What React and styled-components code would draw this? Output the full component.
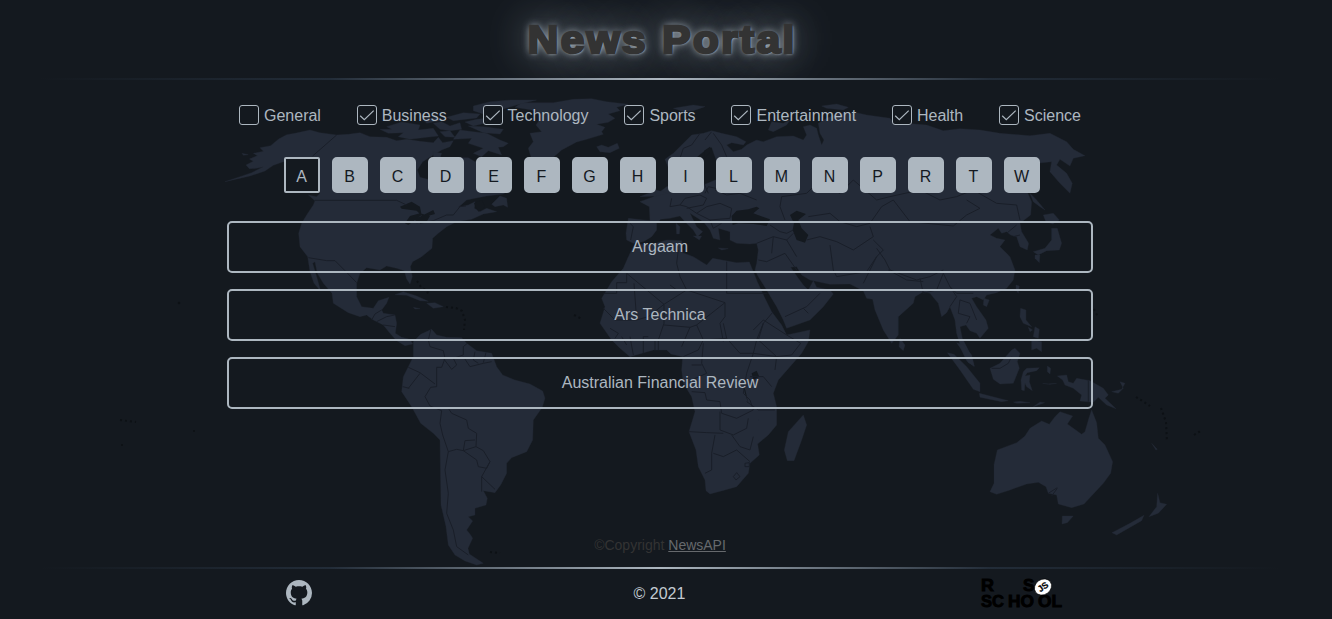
import React from "react";
import styled, { createGlobalStyle } from "styled-components";

const theme = {
  bg: "#14191f",
  land: "#242b38",
  border: "#191e28",
  light: "#adb7c0",
};

const GlobalStyle = createGlobalStyle`
  *, *::before, *::after { box-sizing: border-box; }
  body {
    margin: 0;
    background: ${theme.bg};
    color: ${theme.light};
    font: 16px/18px "Liberation Sans", Arial, sans-serif;
  }
`;

const Page = styled.div`
  position: relative;
  isolation: isolate;
  display: flex;
  flex-direction: column;
  height: 619px;
  padding-right: 12px;
  overflow: hidden;
`;

const MapBackdrop = styled.svg`
  position: absolute;
  inset: 0;
  z-index: -1;
  fill: ${theme.land};
  stroke: ${theme.land};
  stroke-width: 1;
  stroke-linejoin: round;
`;

const Header = styled.header`
  height: 78px;
  flex: none;
  display: flex;
  align-items: center;
  justify-content: center;
  overflow: hidden;
`;

const Title = styled.h1`
  margin: 0 0 0 4px;
  padding-top: 2px;
  font: bold 38.5px/56px "Liberation Sans", "Arial Black", sans-serif;
  letter-spacing: 2.2px;
  transform: scaleX(1.1);
  -webkit-text-stroke: 2.6px #333;
  color: #333;
  text-shadow: 1px 1px 2px #c6d2dc, 0 0 1em ${theme.light}, 0 0 0.2em #c6d2dc;
`;

const Divider = styled.div`
  height: 2px;
  flex: none;
  background: linear-gradient(90deg, transparent 3%, #222c38 25%, ${theme.light} 50%, #222c38 75%, transparent 97%);
`;

const Main = styled.main`
  flex: 1;
  width: 866px;
  margin: 0 auto;
  padding-top: 25px;
  display: flex;
  flex-direction: column;
`;

const Categories = styled.div`
  display: flex;
  justify-content: space-between;
  padding: 0 12px;
  height: 20px;
`;

const Category = styled.label`
  display: flex;
  align-items: flex-start;
  gap: 5px;
  line-height: 22px;
`;

const CheckBox = styled.span`
  display: flex;
  width: 20px;
  height: 20px;
  border: 1px solid ${theme.light};
  border-radius: 3px;
  background: ${theme.bg};
`;

const Letters = styled.nav`
  display: flex;
  justify-content: center;
  gap: 12px;
  margin: 32px 0 28px 4px;
`;

const Letter = styled.button`
  width: 36px;
  height: 36px;
  padding: 3px 1px 0 0;
  border: 2px solid ${theme.light};
  border-radius: ${(p) => (p.$active ? "2px" : "5px")};
  background: ${(p) => (p.$active ? theme.bg : theme.light)};
  color: ${(p) => (p.$active ? theme.light : theme.bg)};
  font: inherit;
`;

const Sources = styled.div`
  display: flex;
  flex-direction: column;
  gap: 16px;
`;

const Source = styled.div`
  height: 52px;
  display: flex;
  align-items: center;
  justify-content: center;
  border: 2px solid ${theme.light};
  border-radius: 5px;
`;

const Copyright = styled.p`
  margin: auto 0 14px;
  text-align: center;
  font-size: 14px;
  line-height: 16px;
  color: #333;
`;

const ApiLink = styled.a`
  color: #66696d;
  text-decoration: underline;
`;

const Footer = styled.footer`
  height: 50px;
  flex: none;
  width: 866px;
  margin: 0 auto;
  padding-bottom: 2px;
  display: grid;
  grid-template-columns: 144px 1fr 144px;
  align-items: center;
  justify-items: center;
  color: #c3cbd2;
`;

const Year = styled.span`
  padding: 2px 1px 0 0;
`;

const FooterIcon = styled.svg`
  display: block;
  fill: ${theme.light};
`;

const SchoolLogo = styled.svg`
  display: block;
  overflow: visible;
  margin: 0 0 1px 1px;
  font: bold 17px "Liberation Sans", Arial, sans-serif;
  fill: #000;
  stroke: #000;
  stroke-width: 0.9;
`;

const categories = ["General", "Business", "Technology", "Sports", "Entertainment", "Health", "Science"];
const letters = "ABCDEFGHILMNPRTW".split("");
const sources = ["Argaam", "Ars Technica", "Australian Financial Review"];

const northAmerica = [
  "15,275 60,260 95,248 130,230 110,235 88,236 78,225 100,214 88,207 112,197 100,190 130,184 120,173 152,167 176,147 200,134 225,130 270,120 300,128 350,135 385,133 420,128 450,140 500,142 530,152 560,148 600,154 640,158 655,142 668,158 700,152 690,170 665,180 640,195 608,215 592,240 600,262 640,272 690,290 700,250 690,215 715,203 745,203 765,215 790,205 810,235 840,270 870,300 850,312 800,318 765,325 740,330 715,352 745,345 765,335 763,355 780,365 800,355 830,365 790,372 755,388 710,395 680,410 655,430 638,445 636,475 605,500 578,515 571,530 577,560 570,582 560,567 553,542 530,535 500,528 480,540 440,533 420,550 410,580 410,620 425,650 460,655 475,632 507,622 500,640 485,660 490,670 525,675 530,700 526,730 545,742 570,748 578,762 555,767 530,752 510,730 490,705 460,690 440,675 420,680 385,668 340,640 336,610 310,580 292,550 285,515 278,520 290,560 302,603 282,580 270,545 263,500 240,470 236,430 245,400 260,375 280,345 285,332 265,315 290,320 300,310 290,270 250,235 210,222 190,215 160,226 135,243 90,258",
  "905,38 1000,38 1060,28 1115,26 1160,35 1225,43 1190,52 1200,62 1165,72 1185,85 1165,97 1130,103 1155,112 1145,125 1150,133 1100,148 1070,156 1025,180 1000,202 990,207 935,207 925,175 940,155 930,130 965,125 948,105 960,88 955,70 935,60 885,52",
  "500,110 545,96 600,105 595,120 640,115 655,138 620,142 570,148 535,140 550,128 505,130 480,118 515,118",
  "640,100 665,95 690,108 720,98 725,118 690,122 660,118",
  "735,96 770,88 800,85 800,98 760,108",
  "720,120 760,125 800,130 840,150 865,160 850,170 835,172 845,195 805,182 785,200 760,190 790,175 745,160 755,145 700,148",
  "760,48 810,35 870,30 950,30 900,42 840,60 790,72 760,62",
  "680,82 730,68 780,72 770,84 700,92",
  "610,88 650,82 670,90 620,100", "745,108 790,110 850,118 840,132 790,128",
  "660,125 690,122 705,142 675,140", "640,185 665,190 660,205 640,200",
  "1130,170 1145,165 1165,172 1192,160 1198,175 1170,188 1140,185",
  "815,343 840,318 860,325 863,352 850,345 825,350",
  "525,614 550,605 590,618 625,634 600,632 560,616", "620,640 645,638 670,650 640,655", "580,652 600,656 585,657",
  "66,190 85,194 70,196",
];

const southAmerica = [
  "100,185 122,163 155,148 170,165 200,172 245,173 260,190 290,212 335,220 350,260 368,285 405,300 450,312 488,333 495,355 487,382 460,420 458,480 440,515 395,533 380,550 380,580 362,615 345,638 310,632 322,655 318,675 285,685 285,705 265,710 278,723 260,750 272,765 278,775 264,805 268,822 310,850 290,855 255,843 225,825 205,795 198,740 183,675 180,480 160,460 122,430 95,380 65,335 70,290 100,230",
];

const africa = [
  "140,462 180,465 230,450 275,452 278,488 310,500 350,525 368,505 400,511 440,518 478,516 490,545 502,575 525,625 545,665 575,705 590,735 660,720 655,755 635,790 600,830 565,870 550,910 560,950 560,1005 535,1035 503,1062 508,1095 480,1120 475,1150 440,1190 405,1200 360,1212 348,1202 345,1170 325,1130 318,1080 297,1025 315,965 305,920 280,880 275,840 278,800 243,792 230,780 190,780 120,800 90,775 65,750 30,700 36,680 45,650 35,625 65,575 100,535 115,500 130,470",
  "640,975 650,1005 635,1050 612,1112 592,1112 583,1080 595,1025",
];

const eurasia = [
  "225,208 250,190 275,165 305,135 340,130 365,122 395,130 440,140 468,155 460,165 425,158 410,165 430,185 455,178 470,165 500,150 520,155 560,140 610,138 640,150 650,135 640,110 660,105 680,115 685,135 695,165 702,150 690,130 685,100 710,85 740,72 800,68 830,75 900,85 910,97 1010,105 1060,122 1110,116 1170,120 1230,130 1320,137 1380,130 1430,155 1450,178 1485,197 1450,205 1440,228 1410,208 1400,225 1430,250 1447,280 1440,310 1410,280 1380,245 1385,215 1340,220 1250,208 1300,280 1325,335 1322,375 1290,400 1295,425 1316,460 1312,480 1290,470 1280,440 1262,435 1250,425 1235,430 1225,415 1200,435 1220,445 1245,450 1230,470 1260,500 1275,540 1270,570 1250,595 1220,608 1190,615 1180,630 1160,620 1145,625 1160,650 1188,690 1195,715 1170,745 1160,730 1140,722 1128,705 1110,710 1117,745 1140,790 1153,830 1130,812 1115,780 1100,730 1095,690 1080,650 1070,668 1055,680 1045,640 1020,610 1000,605 975,620 970,640 925,680 925,735 905,760 880,720 855,660 848,628 830,625 820,602 780,582 720,583 660,570 635,555 620,530 602,532 625,565 640,585 655,600 670,572 680,592 720,600 730,612 700,650 660,690 590,715 580,690 560,650 530,600 505,560 495,540 500,520 505,480 500,460 480,462 440,460 420,450 420,425 385,415 390,450 370,445 360,420 340,395 300,370 320,410 338,425 322,440 310,420 285,395 270,378 240,385 212,388 200,400 200,420 185,440 160,455 130,460 110,450 108,430 115,385 180,392 178,350 150,335 190,320 230,290 262,280 262,240 290,230 300,250 340,285 400,260 375,200 365,172 340,185 310,210 290,250 240,245",
  "695,48 740,42 775,52 760,60 710,55", "535,120 545,95 580,100 600,90 590,105 550,125",
  "250,55 310,45 345,50 310,62 280,65", "150,320 198,300 234,310 200,318",
  "258,400 270,410 268,432 260,432", "310,438 335,438 328,450", "385,474 415,476 395,480",
  "1320,310 1340,330 1365,360 1350,350 1330,335", "1360,375 1390,370 1408,390 1388,402 1368,395",
  "1385,415 1402,415 1415,460 1408,480 1370,482 1345,495 1330,485 1365,475 1385,450", "1335,495 1350,495 1348,518 1335,505",
  "1278,585 1288,588 1285,610 1278,600", "1182,625 1198,630 1190,650 1180,645",
  "930,745 945,765 940,782 927,770", "1292,655 1308,660 1308,690 1325,710 1300,700 1290,680", "1325,750 1355,755 1355,785 1340,775 1325,780",
  "1315,712 1328,720 1320,725", "1335,710 1348,718 1345,745 1330,740",
];

const oceania = [
  "390,275 428,288 412,312 455,343 465,335 478,290 485,270 500,308 505,355 525,375 548,425 542,460 520,490 462,552 425,563 385,552 380,525 355,520 348,500 325,487 290,492 240,510 200,523 180,515 192,490 192,435 202,390 260,368 285,348 300,325 335,303 358,313 375,290",
  "397,588 430,588 412,608 396,612",
  "683,520 690,548 710,553 685,580 657,590 680,560", "642,586 635,602 560,645 546,638 600,610",
  "52,98 72,103 110,140 150,190 150,215 130,208 90,150", "148,220 235,242 215,245 150,232",
  "80,68 100,75 125,105 133,138 115,128 95,90",
  "180,145 210,130 245,90 255,85 270,100 262,125 268,145 250,190 210,192 190,178",
  "280,155 290,145 328,143 320,152 292,158 285,168 300,165 298,185 307,212 290,200 285,190 283,212 275,210 273,180",
  "352,138 362,145 360,162 352,155", "382,168 410,165 415,185 430,190 440,175 480,182 520,205 535,225 525,235 558,266 530,255 505,232 490,247 450,243 455,225 430,205 405,195 398,180",
  "250,246 270,244 300,248 260,250", "310,260 330,246 344,248", "338,190 355,192 380,190 360,193",
  "545,215 575,208 585,190 570,185 580,205 565,220", "665,370 682,388 678,390",
];

const seas = [
  "425,378 440,362 475,358 500,350 508,355 490,370 540,388 530,408 490,402 445,400 428,405",
  "600,375 620,362 648,372 625,390 635,415 655,435 645,458 620,450 608,420 612,400",
  "485,850 500,842 508,860 490,870", "458,882 466,900 475,940 465,910", "500,960 512,1020 505,985", "342,182 360,170 365,180 345,205",
];

function Region({ x, y, shapes, lines, dark }) {
  return (
    <g transform={`translate(${x} ${y}) scale(.3333)`}>
      {shapes.map((points) => (
        <polygon key={points} points={points} />
      ))}
      {dark && (
        <g fill={theme.bg} stroke="none">
          {dark.map((points) => (
            <polygon key={points} points={points} />
          ))}
        </g>
      )}
      <path d={lines} fill="none" stroke={theme.border} strokeWidth="3" />
    </g>
  );
}

const WorldMap = () => (
  <MapBackdrop width="1332" height="619" viewBox="0 0 1332 619" aria-hidden="true">
    <Region
      x={220}
      y={90}
      shapes={northAmerica}
      dark={["540,350 575,335 600,350 605,375 565,405 555,400 570,378 600,370 630,378 620,395 590,400 585,388 640,360 645,372 610,382 590,362 545,356", "762,340 785,330 795,350 775,365"]}
      lines="M350 135 278 198M285 331H530L560 345M600 400 640 392 680 375H700L720 350 738 348M265 503 320 512 345 512 375 542 410 578M455 690 465 672 485 660M470 695 500 680 525 675M490 705 525 710"
    />
    <Region
      x={380}
      y={280}
      shapes={southAmerica}
      lines="M152 150 145 180 150 200 190 212 195 235 185 262 170 262 170 320 152 322 135 350 150 378 185 392 180 430 188 465 205 515 195 570 205 640 200 700 220 750 230 800 265 825M85 262 120 278 165 312M85 325 120 280M68 320 88 325M190 235 215 268 230 255 220 235 250 225 250 200 262 190M250 230 270 260 310 250 335 245M285 215 280 240 295 250M318 218 310 248M205 385 215 400 260 420 265 445 290 460 288 500 250 512 230 508 205 515M250 512 255 482 285 480M288 500 310 512 330 545 320 565 295 560 290 540 250 512M330 545 305 590 345 628M305 590V635"
    />
    <Region
      x={590}
      y={90}
      shapes={[...africa, ...eurasia]}
      dark={seas}
      lines="M110 550 222 643 290 600 270 560 260 520 265 480M410 515V610H530M290 600 405 638V680L390 700 400 755M240 585 260 600M132 580 140 690H75L40 655M110 550V578H80V610H40M140 690 175 680 222 643M222 645V700L205 750V780M195 750V780M175 740H160V790M120 740 130 795M95 740 110 765M60 715 85 730 75 745M222 705 300 712 320 705 405 638M300 712 275 770M320 705 340 750 325 780 280 800M340 750 410 745 450 790 490 790 500 750 520 700 550 665M410 745 400 700M490 720 520 690 590 735M520 700 505 750 560 800 605 795 632 760 590 735M490 790 560 800 555 840M340 760 335 820 350 850 305 870M305 825 335 825M305 905 345 908 350 930 390 935 395 970 440 985 490 960 480 930 460 910 470 850 490 790M480 860 520 860 545 890M470 935 505 960 555 960M390 965V1020L430 1035 470 1015 475 985M297 1025 350 1028 400 1030M375 1035 365 1090V1140L345 1150M370 1090 400 1100 440 1080 480 1115M425 1035 450 1070 480 1080 490 1040M430 1160 440 1148 450 1160 438 1170ZM465 1120 478 1118 478 1130 465 1130ZM330 130 305 165 280 175 265 220M365 125 345 150M370 130 395 165 410 200M345 310 355 290 400 300M240 350 270 345 290 350M240 350 245 325M270 345 285 325 330 315 350 325 340 345 290 355M290 350 320 370 350 350 390 340 425 355 420 385 360 390 320 370M340 275 355 310M375 300 410 315 450 310 500 330M360 390 370 415 395 400M120 400 130 410 122 450M540 405 570 425 590 430 610 420M500 460 550 440 590 450 620 500M505 510 530 515 585 490 620 540M550 440 545 490M590 450 610 430M585 390 570 350 575 320 650 310 680 280 750 310 790 270 860 330 900 320 990 300 1050 330 1100 320 1150 300 1220 340 1280 345 1290 390M655 380 720 370 750 395 800 410 840 400 875 350 910 330 960 395 1090 408 1130 375 1170 355 1130 330M650 450 690 440 740 455 790 480 850 440 840 410M720 465 730 540 740 560 830 545 860 500 880 480 850 450M820 580 840 540 860 500M860 475 885 510 900 540 980 570 1020 560 1060 540M895 540 950 570 1000 575M990 565 1000 610 1040 600 1060 550 1080 590 1100 610 1150 610M1080 590 1100 620 1080 650M1110 630 1140 640 1160 690M1110 630 1105 670 1140 680 1130 700M585 680 650 650 690 610M640 655 655 670M1250 430 1280 405M1270 440 1290 435"
    />
    <Region x={930} y={320} shapes={oceania} lines="M185 145 210 145 235 130 245 110M475 182V245M355 520 382 503M365 528 382 505" />
    <g fill="#0d1115" stroke="none">
      <circle cx="179" cy="303" r="1.3" />
      <circle cx="122" cy="445" r="1" />
      <circle cx="194" cy="431" r="1" />
    </g>
    <path
      d="m417 281 4 6 6 4 2 5M446 307l10 1 6 3 3 9-1 10M1094 309l4 8M1136 397l8 5 6 4M1161 408l5 14 1 20M1194 435l8-5M490 552l10 1M574 315l8 4M120 420l16 2"
      fill="none"
      stroke="#0d1115"
      strokeWidth="2"
      strokeDasharray="2 3"
    />
  </MapBackdrop>
);

export default function App() {
  return (
    <>
      <GlobalStyle />
      <Page>
        <WorldMap />
        <Header>
          <Title>News Portal</Title>
        </Header>
        <Divider />
        <Main>
          <Categories>
            {categories.map((name, i) => (
              <Category key={name}>
                <CheckBox>
                  {i > 0 && (
                    <svg width="18" height="18" viewBox="0 0 18 18" fill="none" stroke={theme.light} strokeWidth="1.2">
                      <path d="M2.2 9.8 6.3 13.7 15.7 4.6" />
                    </svg>
                  )}
                </CheckBox>
                {name}
              </Category>
            ))}
          </Categories>
          <Letters>
            {letters.map((l) => (
              <Letter key={l} $active={l === "A"}>
                {l}
              </Letter>
            ))}
          </Letters>
          <Sources>
            {sources.map((s) => (
              <Source key={s}>{s}</Source>
            ))}
          </Sources>
          <Copyright>
            ©Copyright <ApiLink>NewsAPI</ApiLink>
          </Copyright>
        </Main>
        <Divider />
        <Footer>
          <FooterIcon width="26" height="26" viewBox="0 0 16 16">
            <path d="M8 0C3.58 0 0 3.58 0 8c0 3.54 2.29 6.53 5.47 7.59.4.07.55-.17.55-.38 0-.19-.01-.82-.01-1.49-2.01.37-2.53-.49-2.69-.94-.09-.23-.48-.94-.82-1.13-.28-.15-.68-.52-.01-.53.63-.01 1.08.58 1.23.82.72 1.21 1.87.87 2.33.66.07-.52.28-.87.51-1.07-1.78-.2-3.64-.89-3.64-3.95 0-.87.31-1.59.82-2.15-.08-.2-.36-1.02.08-2.12 0 0 .67-.21 2.2.82.64-.18 1.32-.27 2-.27s1.36.09 2 .27c1.53-1.04 2.2-.82 2.2-.82.44 1.1.16 1.92.08 2.12.51.56.82 1.27.82 2.15 0 3.07-1.87 3.75-3.65 3.95.29.25.54.73.54 1.48 0 1.07-.01 1.93-.01 2.2 0 .21.15.46.55.38A8.01 8.01 0 0 0 16 8c0-4.42-3.58-8-8-8z" />
          </FooterIcon>
          <Year>© 2021</Year>
          <SchoolLogo width="82" height="32" viewBox="0 0 82 32">
            <text x="0" y="14" textLength="13" lengthAdjust="spacingAndGlyphs">R</text>
            <text x="42" y="14">S</text>
            <text x="0" y="29.5" textLength="23" lengthAdjust="spacingAndGlyphs">SC</text>
            <text x="27" y="29.5" textLength="26" lengthAdjust="spacingAndGlyphs">HO</text>
            <text x="57" y="29.5" textLength="24" lengthAdjust="spacingAndGlyphs">OL</text>
            <ellipse cx="62" cy="10" rx="9" ry="7.6" fill="#fff" strokeWidth=".6" transform="rotate(-35 62 10)" />
            <text x="56.5" y="13" fontSize="9" strokeWidth=".2" transform="rotate(-35 62 10)">JS</text>
          </SchoolLogo>
        </Footer>
      </Page>
    </>
  );
}
